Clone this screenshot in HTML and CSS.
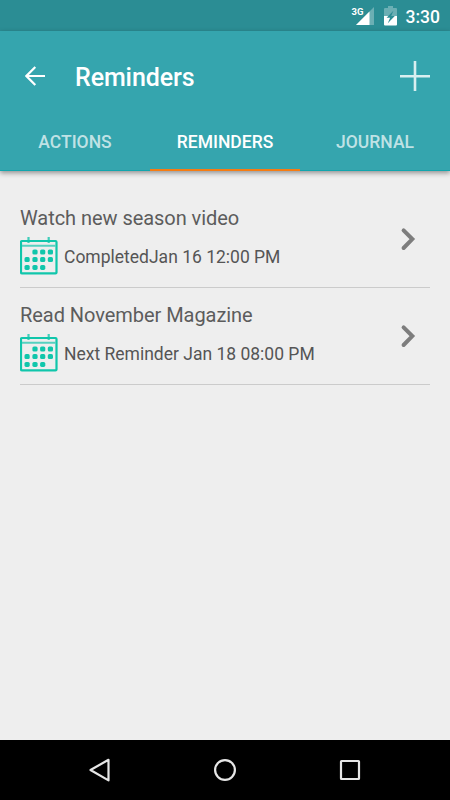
FILE: index.html
```html
<!DOCTYPE html>
<html lang="en">
<head>
<meta charset="UTF-8">
<meta name="viewport" content="width=device-width, initial-scale=1.0">
<title>Reminders</title>
<link rel="stylesheet" href="styles.css">
</head>
<body>

<!-- calendar icon used by every reminder -->
<svg class="symbols" width="0" height="0">
    <symbol id="calendar" viewBox="0 0 38 38">
        <path d="M8.5 0v6M28.7 0v6" stroke="#40cdb9" stroke-width="2.2"/>
        <rect x="1" y="4" width="35.5" height="32.4" rx="1" fill="none" stroke="#10c6ab" stroke-width="2.2"/>
        <path d="M2 8.7h34" stroke="#55d1c0" stroke-width="2"/>
        <g fill="#10c6ab">
            <rect x="12.4" y="12.5" width="5.2" height="5" rx="1.6"/>
            <rect x="20.1" y="12.5" width="5.2" height="5" rx="1.6"/>
            <rect x="27.8" y="12.5" width="5.2" height="5" rx="1.6"/>
            <rect x="4.5" y="20.1" width="5.2" height="5" rx="1.6"/>
            <rect x="12.4" y="20.1" width="5.2" height="5" rx="1.6"/>
            <rect x="20.1" y="20.1" width="5.2" height="5" rx="1.6"/>
            <rect x="27.8" y="20.1" width="5.2" height="5" rx="1.6"/>
            <rect x="4.5" y="27.9" width="5.2" height="5" rx="1.6"/>
            <rect x="12.4" y="27.9" width="5.2" height="5" rx="1.6"/>
            <rect x="20.1" y="27.9" width="5.2" height="5" rx="1.6"/>
        </g>
    </symbol>
</svg>

<div class="screen">
    <div class="status-bar">
        <span class="network">3G</span>
        <svg class="signal" width="18" height="18" viewBox="0 0 18 18">
            <path d="M18 0V18H0z" fill="#fff" fill-opacity=".3"/>
            <path d="M13.5 4.5V18H0z" fill="#fff"/>
        </svg>
        <svg class="battery" width="13" height="20" viewBox="0 0 13 20">
            <path d="M4 0h5v2h3a1 1 0 0 1 1 1v7H0V3a1 1 0 0 1 1-1h3z" fill="#fff" fill-opacity=".3"/>
            <path d="M0 10h13v8.5a1 1 0 0 1-1 1H1a1 1 0 0 1-1-1z" fill="#fff"/>
            <path d="M9.4 4.8L2.6 11.8h3.5l-2.3 5.4 7-7.2H7.2z" fill="#2b8d94"/>
        </svg>
        <span class="clock">3:30</span>
    </div>

    <header class="header">
        <div class="toolbar">
            <svg class="back" width="20" height="20" viewBox="0 0 20 20">
                <path d="M20 10H1.6M10.3 .9L1.4 10l8.9 9.1" fill="none" stroke="#fff" stroke-width="2.2"/>
            </svg>
            <h1 class="title">Reminders</h1>
            <svg class="add" width="30" height="30" viewBox="0 0 30 30">
                <path d="M15 0v30M0 15.2h30" stroke="#d9eff0" stroke-width="2.6"/>
            </svg>
        </div>
        <nav class="tabs">
            <a class="tab">ACTIONS</a>
            <a class="tab active">REMINDERS</a>
            <a class="tab">JOURNAL</a>
        </nav>
    </header>

    <main class="list">
        <div class="item">
            <div class="info">
                <h2>Watch new season video</h2>
                <div class="date">
                    <svg width="38" height="38"><use href="#calendar"/></svg>
                    <span>CompletedJan 16 12:00 PM</span>
                </div>
            </div>
            <svg class="chevron" width="16" height="24" viewBox="0 0 16 24">
                <path d="M3.6 3.4l8.7 8.7-8.7 8.9"/>
            </svg>
        </div>
        <div class="item">
            <div class="info">
                <h2>Read November Magazine</h2>
                <div class="date">
                    <svg width="38" height="38"><use href="#calendar"/></svg>
                    <span>Next Reminder Jan 18 08:00 PM</span>
                </div>
            </div>
            <svg class="chevron" width="16" height="24" viewBox="0 0 16 24">
                <path d="M3.6 3.4l8.7 8.7-8.7 8.9"/>
            </svg>
        </div>
    </main>

    <footer class="nav-bar">
        <svg width="24" height="24" viewBox="0 0 24 24">
            <path d="M20.5 1.8v20.6L2.5 12z"/>
        </svg>
        <svg width="24" height="24" viewBox="0 0 24 24">
            <circle cx="12" cy="12" r="9.9"/>
        </svg>
        <svg width="24" height="24" viewBox="0 0 24 24">
            <rect x="3" y="3" width="18" height="18" rx=".5"/>
        </svg>
    </footer>
</div>

</body>
</html>
```

FILE: styles.css
```css
body {
    font-family: Roboto, sans-serif;
    margin: 0;
    padding: 0;
}
.symbols {
    display: block;
}
.screen {
    display: flex;
    flex-direction: column;
    width: 450px;
    height: 800px;
    background-color: #eee;
}
.status-bar {
    display: flex;
    justify-content: flex-end;
    height: 31px;
    padding-right: 10px;
    background-color: #2b8d94;
    color: #fff;
}
.network {
    font-size: 9.5px;
    font-weight: bold;
    line-height: 12px;
    margin-top: 6px;
    margin-right: -8px;
}
.signal {
    margin-top: 7px;
}
.battery {
    margin: 6px 9px 0 10px;
}
.clock {
    font-size: 17.5px;
    font-weight: 500;
    line-height: 34px;
}
.header {
    height: 140px;
    background-color: #35a5ae;
    box-shadow: 0 2px 5px rgba(0, 0, 0, 0.4);
}
.toolbar {
    display: flex;
    align-items: center;
    height: 90px;
    padding: 0 20px 0 25px;
}
.title {
    flex: 1;
    margin: 2px 0 0 30px;
    color: #fff;
    font-size: 25px;
    font-weight: 500;
    letter-spacing: -0.1px;
}
.tabs {
    display: flex;
    height: 50px;
}
.tab {
    flex: 1;
    box-sizing: border-box;
    border-bottom: 1px solid #11a5ad;
    color: rgba(255, 255, 255, 0.7);
    font-size: 17.5px;
    font-weight: 500;
    line-height: 42px;
    text-align: center;
}
.tab.active {
    border-bottom: 2px solid #f57c13;
    color: #fff;
}
.list {
    flex: 1;
    padding: 20px 20px 0;
}
.item {
    display: flex;
    align-items: center;
    box-sizing: border-box;
    height: 97px;
    border-bottom: 1px solid #cbcbcb;
}
.info {
    flex: 1;
    padding-top: 3px;
}
.info h2 {
    margin: 0;
    color: #5c5c5c;
    font-size: 20px;
    font-weight: normal;
    letter-spacing: -0.05px;
    line-height: 30px;
}
.date {
    display: flex;
    align-items: center;
    gap: 6px;
    height: 46px;
    color: #555;
    font-size: 17.5px;
}
.date span {
    padding-top: 2px;
}
.chevron {
    margin-right: 14px;
    fill: none;
    stroke: #7d7d7d;
    stroke-width: 4;
    stroke-linecap: round;
}
.nav-bar {
    display: flex;
    justify-content: center;
    align-items: center;
    gap: 101px;
    height: 60px;
    background-color: #000;
}
.nav-bar svg {
    fill: none;
    stroke: #e6e6e6;
    stroke-width: 2.2;
    stroke-linejoin: round;
}
```
